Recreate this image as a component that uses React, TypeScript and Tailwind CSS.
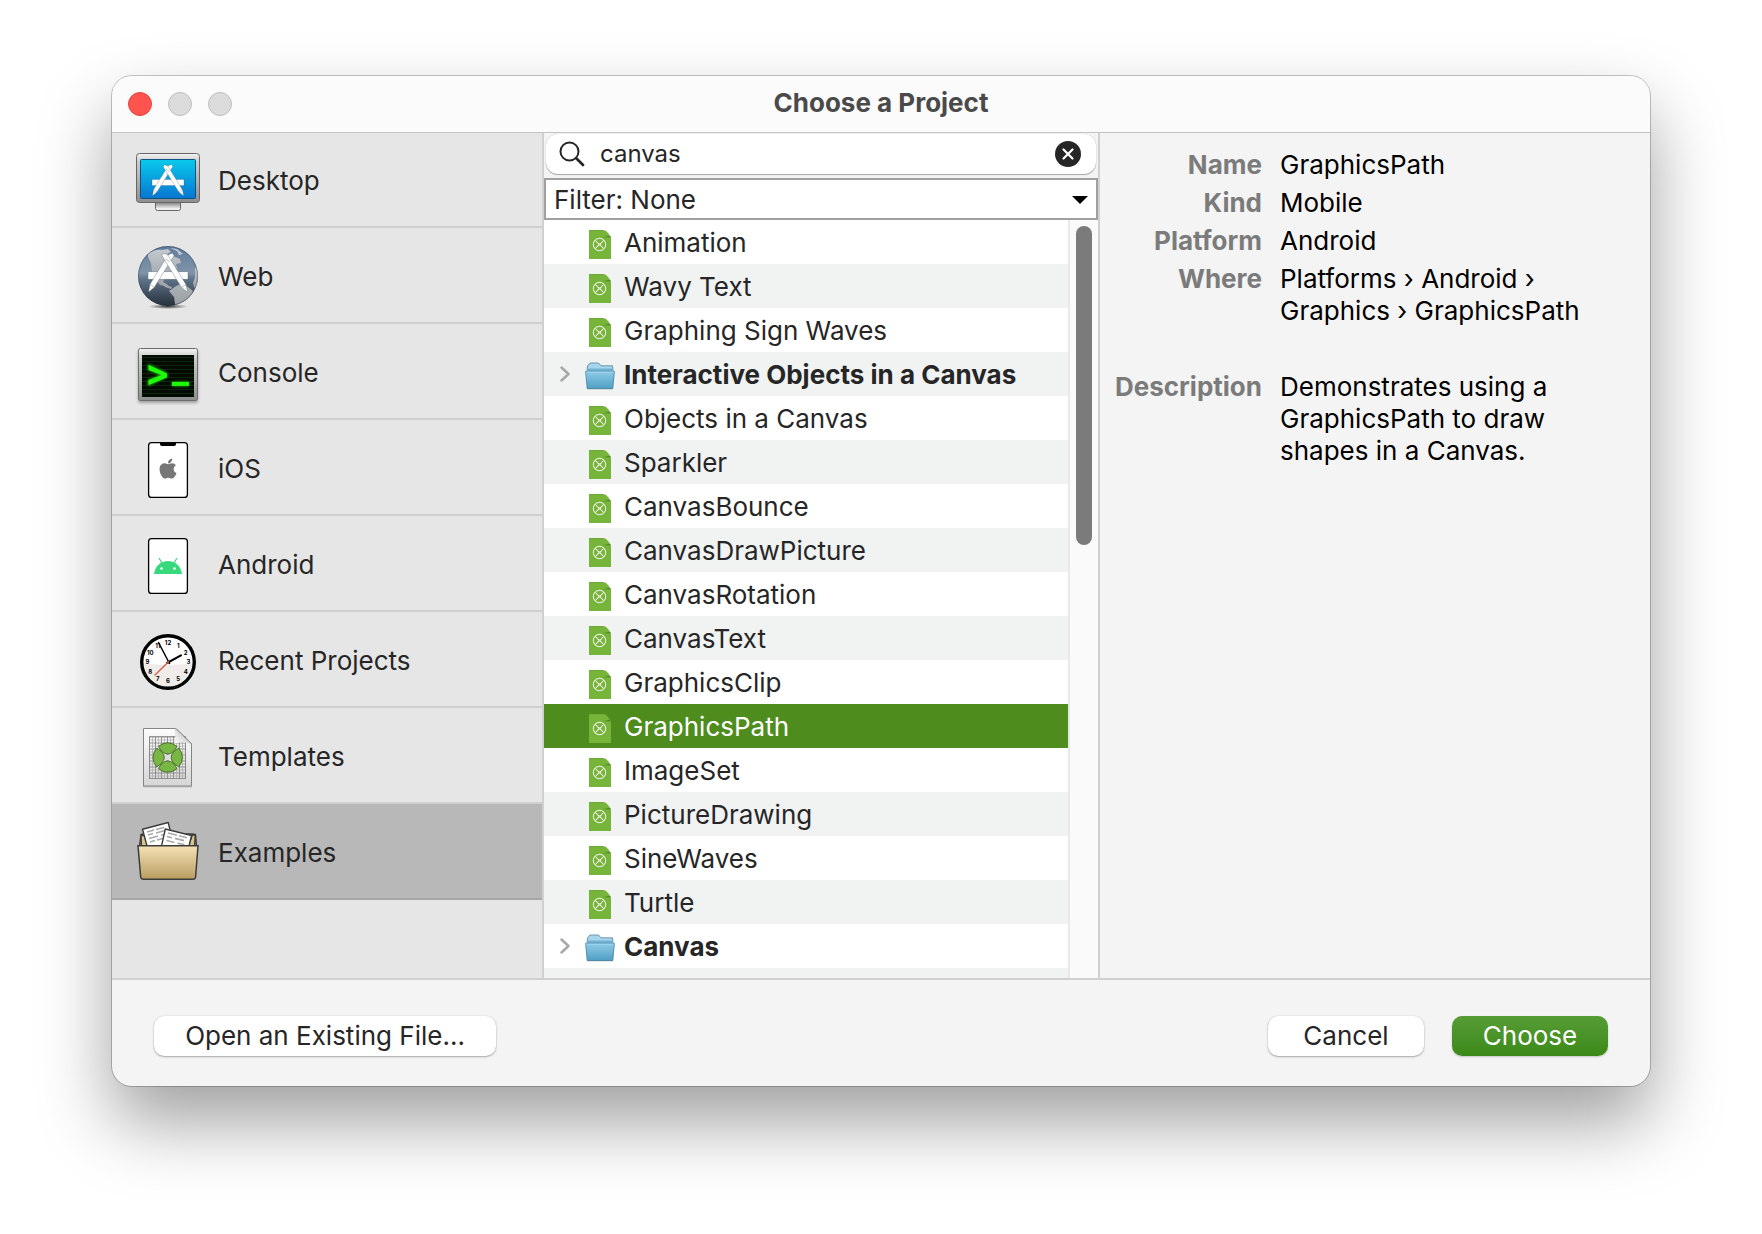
import { useState } from "react";
import type { ReactNode } from "react";
import { FaApple } from "react-icons/fa6";
import clsx from "clsx";

type Category = {
    label: string;
    icon: ReactNode;
};

type Project = {
    name: string;
    folder?: boolean;
};

// Two crossed pencils and a ruler, shared by the desktop and web icons
const AppMark = () => (
    <g fill="#fff" stroke="#3d5566" strokeOpacity="0.55" strokeWidth="0.5">
        <rect x="0" y="15" width="32" height="6" />
        <path d="M16 1.5 19.5 0l1.3 2L5 27.5.8 31l-.3-.3L1.6 25z" />
        <path d="M15.8 1.5 12.3.2l-1.1 2L26.8 27.5l4.4 3.5.4-.4-1.2-5.4z" />
        <path
            d="m1.6 25 3.4 2.5M30.4 25.2l-3.6 2.3M13.8 4.6l3.8 2.4"
            fill="none"
        />
    </g>
);

const DesktopIcon = () => (
    <svg viewBox="0 0 64 64" className="size-16">
        <defs>
            <linearGradient id="bezel" x1="0" y1="0" x2="0" y2="1">
                <stop offset="0" stopColor="#f5f5f5" />
                <stop offset="0.15" stopColor="#cfcfcf" />
                <stop offset="1" stopColor="#8e8e8e" />
            </linearGradient>
            <linearGradient id="screen" x1="0" y1="0" x2="0" y2="1">
                <stop offset="0" stopColor="#09caec" />
                <stop offset="1" stopColor="#0876d2" />
            </linearGradient>
            <linearGradient id="stand" x1="0" y1="0" x2="0" y2="1">
                <stop offset="0.2" stopColor="#8a8a8a" />
                <stop offset="0.8" stopColor="#f0f0f0" />
            </linearGradient>
        </defs>
        <rect
            x="19.5"
            y="52"
            width="25"
            height="9.5"
            rx="2"
            fill="url(#stand)"
            stroke="#666"
        />
        <rect
            x="0.5"
            y="4.5"
            width="63"
            height="49"
            rx="3"
            fill="url(#bezel)"
            stroke="#666"
        />
        <rect
            x="4.5"
            y="10.5"
            width="55"
            height="39"
            rx="1"
            fill="url(#screen)"
            stroke="#0b5583"
        />
        <g transform="translate(16 15.5)">
            <AppMark />
        </g>
    </svg>
);

const WebIcon = () => (
    <svg viewBox="0 0 64 64" className="size-16">
        <defs>
            <linearGradient id="ocean" x1="0" y1="0" x2="0" y2="1">
                <stop offset="0" stopColor="#5f7c9c" />
                <stop offset="0.45" stopColor="#8094a8" />
                <stop offset="0.55" stopColor="#5f7488" />
                <stop offset="1" stopColor="#26303c" />
            </linearGradient>
            <linearGradient id="land" x1="0" y1="0" x2="0" y2="1">
                <stop offset="0" stopColor="#c3c9cf" />
                <stop offset="1" stopColor="#9b9fa3" />
            </linearGradient>
            <radialGradient id="ground">
                <stop offset="0" stopColor="#000" stopOpacity="0.75" />
                <stop offset="1" stopColor="#000" stopOpacity="0" />
            </radialGradient>
            <clipPath id="globe">
                <circle cx="32" cy="31" r="30" />
            </clipPath>
        </defs>
        <ellipse cx="32" cy="61.5" rx="20" ry="2.5" fill="url(#ground)" />
        <circle cx="32" cy="31" r="30" fill="url(#ocean)" />
        <g clipPath="url(#globe)" fill="url(#land)">
            <path d="M12 9c4-3 8-5 14-4l6-1 3 3-4 2 6 2 7 3 1 4-5 1 1 4-5 3-4 3-3 5-3 4 3 3-5-1-5-6-3-8-1-8-3-6z" />
            <path d="m34 3 7 1 6 5-4 1-2-4zM40 41l5-2 7 3 5 4-3 7-6 6-6 4-3-4-1-7-5-6z" />
            <path d="M24 36l5 2 4 3 3 1-1 2-6-2zM59 22l5 6-1 14-4 3-2-7 2-6z" />
        </g>
        <circle
            cx="32"
            cy="31"
            r="29.5"
            fill="none"
            stroke="#2d3a48"
            strokeOpacity="0.4"
        />
        <g transform="translate(12 8) scale(1.25)">
            <AppMark />
        </g>
    </svg>
);

const ConsoleIcon = () => (
    <svg viewBox="0 0 64 64" className="size-16 overflow-visible">
        <defs>
            <pattern
                id="scanlines"
                width="4"
                height="4"
                patternUnits="userSpaceOnUse">
                <rect width="4" height="4" fill="#020a02" />
                <rect width="4" height="1" fill="#0d260c" />
            </pattern>
            <filter id="glow" x="-30%" y="-30%" width="160%" height="160%">
                <feGaussianBlur stdDeviation="1.5" />
            </filter>
        </defs>
        <rect
            x="2"
            y="9"
            width="60"
            height="53"
            rx="2"
            fill="#000"
            opacity="0.3"
            filter="url(#glow)"
        />
        <rect
            x="2.5"
            y="7.5"
            width="59"
            height="52"
            rx="2"
            fill="url(#bezel)"
            stroke="#6d6d6d"
        />
        <rect x="6" y="14" width="52" height="42" fill="url(#scanlines)" />
        <g fill="#23d30c" filter="url(#glow)">
            <path d="M12 23v6l13 5-13 5v6l19-9v-4z" />
            <path d="M36 41h17v4H36z" />
        </g>
        <g fill="#1dff08">
            <path d="M12.5 24v5L26 34l-13.5 5v5L31 36.5v-4z" />
            <path d="M36 41h17v3.8H36z" />
        </g>
    </svg>
);

const IosIcon = () => (
    <svg viewBox="0 0 64 64" className="size-16">
        <rect
            x="12.6"
            y="5.6"
            width="38.8"
            height="54.8"
            rx="3"
            fill="#fff"
            stroke="#000"
            strokeWidth="1.3"
        />
        <path d="M24 5h16v2q0 2-2 2H26q-2 0-2-2z" />
        <FaApple x="20.5" y="20" size={23} color="#777" />
    </svg>
);

const AndroidIcon = () => (
    <svg viewBox="0 0 64 64" className="size-16">
        <rect
            x="12.6"
            y="5.6"
            width="38.8"
            height="54.8"
            rx="3"
            fill="#fff"
            stroke="#000"
            strokeWidth="1.3"
        />
        <path d="M18 41C19 33 25 28 32 28s13 5 14 13z" fill="#38d97c" />
        <path
            d="m23.3 25.5 2.9 5M40.7 25.5l-2.9 5"
            stroke="#38d97c"
            strokeWidth="1.2"
            strokeLinecap="round"
        />
        <circle cx="25.5" cy="35.5" r="1.3" fill="#fff" />
        <circle cx="38.5" cy="35.5" r="1.3" fill="#fff" />
    </svg>
);

const ClockIcon = () => {
    const hours = [1, 2, 3, 4, 5, 6, 7, 8, 9, 10, 11, 12];

    return (
        <svg viewBox="0 0 64 64" className="size-16">
            <circle cx="32" cy="33" r="26.5" fill="#fff" />
            <path d="M7 34q25 4 50 0a25 25 0 0 1-50 0z" fill="#efecea" />
            <circle
                cx="32"
                cy="33"
                r="26.3"
                fill="none"
                stroke="#000"
                strokeWidth="3.4"
            />
            {hours.map((hour) => (
                <text
                    key={hour}
                    x={32 + 20.5 * Math.sin((hour * Math.PI) / 6)}
                    y={35.3 - 19 * Math.cos((hour * Math.PI) / 6)}
                    textAnchor="middle"
                    className="font-['Inter'] text-[6px] font-bold">
                    {hour}
                </text>
            ))}
            <path
                d="m33.5 34.5-11-21"
                stroke="#000"
                strokeWidth="1.5"
                strokeLinecap="round"
            />
            <path
                d="M31 34l14-7.7"
                stroke="#000"
                strokeWidth="2"
                strokeLinecap="round"
            />
            <path
                d="M32.5 32.7 19 46"
                stroke="#d9604a"
                strokeWidth="1.5"
                strokeLinecap="round"
            />
        </svg>
    );
};

const TemplateIcon = () => (
    <svg viewBox="0 0 64 64" className="size-16 overflow-visible">
        <defs>
            <linearGradient id="sheet" x1="0" y1="0" x2="0" y2="1">
                <stop offset="0" stopColor="#fdfdfd" />
                <stop offset="1" stopColor="#d6d6d6" />
            </linearGradient>
            <linearGradient id="curl" x1="0" y1="1" x2="1" y2="0">
                <stop offset="0" stopColor="#fff" />
                <stop offset="0.5" stopColor="#d8d8d8" />
                <stop offset="1" stopColor="#f2f2f2" />
            </linearGradient>
            <pattern
                id="grid"
                x="13"
                y="11.5"
                width="6"
                height="6"
                patternUnits="userSpaceOnUse">
                <path d="M0 .5h6M.5 0v6" stroke="#858585" strokeWidth="0.9" />
                <path
                    d="M0 3.5h6M3.5 0v6"
                    stroke="#a9a9a9"
                    strokeWidth="0.7"
                />
            </pattern>
        </defs>
        <path d="M7 58h49v4.5H7z" fill="#000" opacity="0.15" />
        <path
            d="M7.5 3.5H40L55.5 19v42h-48z"
            fill="url(#sheet)"
            stroke="#858585"
        />
        <path d="M13 11.5h37V54H13z" fill="url(#grid)" />
        <path
            d="M13.5 11.5h36v42h-36z"
            fill="none"
            stroke="#858585"
            strokeWidth="0.8"
        />
        <path
            d="m21.5 22.3 20.4 20.4m0-20.4L21.5 42.7"
            stroke="#f0f0f0"
            strokeWidth="2"
        />
        <g fill="#78b744" stroke="#47682d" strokeWidth="0.9">
            <path d="M22.3 21.5q9.4-7.5 18.8 0-3 5.5-6.4 7-3 .9-6 0-3.4-1.500-6.400-7z" />
            <path d="M22.3 43.5q9.4 7.5 18.8 0-3-5.5-6.4-7-3-.9-6 0-3.4 1.5-6.4 7z" />
            <path d="M20.7 23.1q-7.5 9.4 0 18.8 5.5-3 7-6.4.9-3 0-6-1.5-3.4-7-6.4z" />
            <path d="M42.7 23.1q7.5 9.4 0 18.8-5.5-3-7-6.4-.9-3 0-6 1.5-3.4 7-6.4z" />
        </g>
        <rect x="29" y="30" width="5.5" height="5" fill="#ddd" />
        <path
            d="M38.5 4c1 4 1 9 0 14.5 6-1.5 11-1.5 17 .5L40 3.5z"
            fill="url(#curl)"
        />
        <path d="M40 3.5 55.5 19" stroke="#858585" fill="none" />
    </svg>
);

const ExamplesIcon = () => (
    <svg viewBox="0 0 64 64" className="size-16">
        <defs>
            <linearGradient id="box" x1="0" y1="0" x2="0" y2="1">
                <stop offset="0" stopColor="#f5e2b5" />
                <stop offset="1" stopColor="#b99c61" />
            </linearGradient>
        </defs>
        <g stroke="#3b3d3b" strokeWidth="1.4" strokeLinejoin="round">
            <path d="M3.5 25 5 13.5l3-.5h48l3.500.5L60.5 25z" fill="#b79a60" />
            <path d="M8 13.5 12 25H5.5L5 15z" fill="#dcc48e" />
            <path d="m56.5 13.5-4 11.5h6l.7-10z" fill="#dcc48e" />
            <path d="m6.5 8.3 25.7-6.8L38 25H11z" fill="#fff" />
        </g>
        <path
            d="m11 11 7-2m2-.5 8-2M12 14l5-1.4m3-.6 9-2.5M13 17.5l9-2.5m3-.8 4-1M14 21l5-1.4m2-.6 6-1.5"
            stroke="#a9a9a9"
            strokeWidth="1.6"
        />
        <path
            d="M29.3 8 55.5 14.5 53 25H25.5z"
            fill="#fff"
            stroke="#3b3d3b"
            strokeWidth="1.4"
        />
        <path
            d="m32 12 9 2.2m2 .5 8 2M31 15.5l5 1.2m3 .7 9 2.2M30.5 19.5l8 2m3 .6 7 1.7"
            stroke="#a9a9a9"
            strokeWidth="1.6"
        />
        <path
            d="M2 24.8h60L59.6 56q-.3 2.3-2.6 2.3H7.5Q5 58.3 4.7 56z"
            fill="url(#box)"
            stroke="#3b3d3b"
            strokeWidth="1.5"
        />
    </svg>
);

const FileIcon = () => (
    <svg viewBox="0 0 22 29" className="h-[29px] w-[22px]">
        <path d="M0 0h14q3 0 5.2 3.2L22 7.5V29H0z" fill="#76b43a" />
        <path d="M0 0h14l1 .6H0z" fill="#66a02e" />
        <path d="M13.5 7.3h8.4l-1-1.5z" fill="#4e8424" />
        <g fill="none" stroke="#fff" strokeWidth="1">
            <circle cx="10.5" cy="14.5" r="6.2" />
            <path d="m6.2 10.2 3 3.2q1.3 1 2.6 0l3-3.2M6.2 18.8l3-3.2q1.3-1 2.6 0l3 3.2M6.2 10.2l3 3.2q1 1.1 0 2.2l-3 3.2M14.8 10.2l-3 3.2q-1 1.1 0 2.2l3 3.2" />
        </g>
    </svg>
);

const FolderIcon = () => (
    <svg viewBox="0 0 30 28" className="h-7 w-[30px]">
        <defs>
            <linearGradient id="folder" x1="0" y1="0" x2="0" y2="1">
                <stop offset="0" stopColor="#8fcbe8" />
                <stop offset="1" stopColor="#4f9fc4" />
            </linearGradient>
        </defs>
        <path d="M2 26.5h26v1.2H2z" fill="#000" opacity="0.15" />
        <path
            d="M2 9.5 2.5 4 5 1h8.5L16 3.8h11.5l.6 5.7z"
            fill="#a5d6ee"
            stroke="#56819a"
            strokeWidth="0.8"
        />
        <path d="M2.5 6.5h25v3h-25z" fill="#73b1d1" />
        <path
            d="M.6 9.3h28.8l-1.6 17.2H2.2z"
            fill="url(#folder)"
            stroke="#3e7f9f"
            strokeWidth="0.8"
        />
        <path d="M1.2 10h27.6" stroke="#b4e0f2" strokeWidth="0.8" />
    </svg>
);

const categories: Category[] = [
    { label: "Desktop", icon: <DesktopIcon /> },
    { label: "Web", icon: <WebIcon /> },
    { label: "Console", icon: <ConsoleIcon /> },
    { label: "iOS", icon: <IosIcon /> },
    { label: "Android", icon: <AndroidIcon /> },
    { label: "Recent Projects", icon: <ClockIcon /> },
    { label: "Templates", icon: <TemplateIcon /> },
    { label: "Examples", icon: <ExamplesIcon /> },
];

const projects: Project[] = [
    { name: "Animation" },
    { name: "Wavy Text" },
    { name: "Graphing Sign Waves" },
    { name: "Interactive Objects in a Canvas", folder: true },
    { name: "Objects in a Canvas" },
    { name: "Sparkler" },
    { name: "CanvasBounce" },
    { name: "CanvasDrawPicture" },
    { name: "CanvasRotation" },
    { name: "CanvasText" },
    { name: "GraphicsClip" },
    { name: "GraphicsPath" },
    { name: "ImageSet" },
    { name: "PictureDrawing" },
    { name: "SineWaves" },
    { name: "Turtle" },
    { name: "Canvas", folder: true },
];

const Sidebar = () => {
    const [active, setActive] = useState("Examples");

    return (
        <nav className="w-[432px] shrink-0 border-r-2 border-[#d0d0d0] bg-[#e6e6e6]">
            {categories.map(({ label, icon }) => (
                <button
                    key={label}
                    onClick={() => setActive(label)}
                    className={clsx(
                        "flex h-24 w-full items-center gap-[18px] border-b-2 pt-0.5 pl-6 text-left",
                        label === active
                            ? "border-[#a6a6a6] bg-[#b8b8b8]"
                            : "border-[#d0d0d0]"
                    )}>
                    <span className="pt-0.5">{icon}</span>
                    {label}
                </button>
            ))}
        </nav>
    );
};

const ProjectList = () => {
    const [search, setSearch] = useState("canvas");
    const [selected, setSelected] = useState("GraphicsPath");

    return (
        <section className="flex w-[556px] shrink-0 flex-col border-r-2 border-[#d0d0d0]">
            <div className="mx-0.5 mt-0.5 mb-1 flex h-10 shrink-0 items-center rounded-xl bg-white pr-[15px] pl-[13px] shadow-[0_1px_1px_rgba(0,0,0,0.3),0_0_1px_rgba(0,0,0,0.25)]">
                <svg
                    viewBox="0 0 26 26"
                    fill="none"
                    stroke="#262626"
                    className="size-[26px] shrink-0">
                    <circle cx="10.5" cy="10.5" r="9" strokeWidth="2" />
                    <path
                        d="m17.5 17.5 6.5 6.5"
                        strokeWidth="2.8"
                        strokeLinecap="round"
                    />
                </svg>
                <input
                    type="text"
                    aria-label="Search"
                    value={search}
                    onChange={(e) => setSearch(e.target.value)}
                    className="ml-[15px] min-w-0 flex-1 text-2xl outline-none"
                />
                <button aria-label="Clear" onClick={() => setSearch("")}>
                    <svg viewBox="0 0 26 26" className="size-[26px]">
                        <circle cx="13" cy="13" r="13" fill="#262626" />
                        <path
                            d="m8.5 8.5 9 9m0-9-9 9"
                            stroke="#fff"
                            strokeWidth="2.2"
                            strokeLinecap="round"
                        />
                    </svg>
                </button>
            </div>
            <div className="relative shrink-0">
                <select
                    aria-label="Filter"
                    className="block h-[42px] w-full appearance-none border-2 border-[#a0a0a0] bg-white pb-0.5 pl-2 outline-none">
                    <option>Filter: None</option>
                </select>
                <svg
                    viewBox="0 0 16 8"
                    className="pointer-events-none absolute top-[18px] right-2.5 h-2 w-4">
                    <path d="M0 0h16L8 8z" />
                </svg>
            </div>
            <div className="flex min-h-0 flex-1">
                <ul className="min-w-0 flex-1 overflow-hidden bg-[#f1f3f3]">
                    {projects.map(({ name, folder }) => (
                        <li key={name} className="odd:bg-white">
                            <button
                                onClick={() => setSelected(name)}
                                className={clsx(
                                    "flex h-11 w-full items-center pl-4 text-left",
                                    folder && "font-bold",
                                    name === selected &&
                                        "bg-[#4e8c1e] text-white"
                                )}>
                                <span className="w-[25px] shrink-0">
                                    {folder && (
                                        <svg
                                            viewBox="0 0 10 16"
                                            fill="none"
                                            className="h-4 w-2.5">
                                            <path
                                                d="m1.5 1.5 7 6.5-7 6.5"
                                                stroke="#a8a8a8"
                                                strokeWidth="2.5"
                                                strokeLinecap="round"
                                                strokeLinejoin="round"
                                            />
                                        </svg>
                                    )}
                                </span>
                                <span className="flex w-[30px] shrink-0 justify-center pt-1">
                                    {folder ? <FolderIcon /> : <FileIcon />}
                                </span>
                                <span className="pl-[9px] whitespace-nowrap">
                                    {name}
                                </span>
                            </button>
                        </li>
                    ))}
                </ul>
                <div className="flex w-[30px] justify-center border-l-2 border-[#e8e8e8] bg-[#fafafa] pt-1.5">
                    <div className="h-[42.4%] w-4 rounded-full bg-[#7b7b7b]" />
                </div>
            </div>
        </section>
    );
};

const Details = () => (
    <dl className="grid min-w-0 flex-1 grid-cols-[162px_1fr] content-start gap-x-[18px] gap-y-1.5 pt-[17px] pr-10 leading-8 text-black [&>dt]:text-right [&>dt]:font-bold [&>dt]:text-[#7b7b7b]">
        <dt>Name</dt>
        <dd>GraphicsPath</dd>
        <dt>Kind</dt>
        <dd>Mobile</dd>
        <dt>Platform</dt>
        <dd>Android</dd>
        <dt>Where</dt>
        <dd>Platforms › Android › Graphics › GraphicsPath</dd>
        <dt className="pt-[38px]">Description</dt>
        <dd className="pt-[38px]">
            Demonstrates using a GraphicsPath to draw shapes in a Canvas.
        </dd>
    </dl>
);

const App = () => {
    return (
        <div className="flex h-screen bg-white px-28 pt-19 pb-37 font-['Inter',sans-serif] text-[26px] text-[#262626]">
            <main className="flex min-w-0 flex-1 flex-col overflow-hidden rounded-[20px] bg-[#f4f4f4] shadow-[0_0_0_1px_rgba(0,0,0,0.22),0_36px_72px_rgba(0,0,0,0.38)]">
                <header className="relative z-10 grid h-14 shrink-0 grid-cols-[1fr_auto_1fr] items-center bg-[#fbfbfb] px-4 shadow-[0_1px_0_#c4c4c4]">
                    <div className="flex gap-4">
                        <button
                            aria-label="Close"
                            className="size-6 rounded-full border border-[#e2463f] bg-[#ff544d]"
                        />
                        <button
                            aria-label="Minimize"
                            className="size-6 rounded-full border border-[#bebebe] bg-[#dcdcdc]"
                        />
                        <button
                            aria-label="Zoom"
                            className="size-6 rounded-full border border-[#bebebe] bg-[#dcdcdc]"
                        />
                    </div>
                    <h1 className="pb-1 font-bold text-[#4a4a4a]">
                        Choose a Project
                    </h1>
                </header>
                <div className="flex min-h-0 flex-1">
                    <Sidebar />
                    <ProjectList />
                    <Details />
                </div>
                <footer className="flex h-[108px] shrink-0 items-start gap-7 border-t-2 border-[#d0d0d0] px-[42px] pt-9">
                    <button className="mr-auto h-10 w-[342px] rounded-[10px] bg-white pb-0.5 shadow-[0_1px_2px_rgba(0,0,0,0.3),0_0_1px_rgba(0,0,0,0.25)]">
                        Open an Existing File...
                    </button>
                    <button className="h-10 w-39 rounded-[10px] bg-white pb-0.5 shadow-[0_1px_2px_rgba(0,0,0,0.3),0_0_1px_rgba(0,0,0,0.25)]">
                        Cancel
                    </button>
                    <button className="h-10 w-39 rounded-[10px] bg-linear-to-b from-[#579c35] to-[#3b8a18] pb-0.5 text-white shadow-[0_1px_2px_rgba(0,0,0,0.2)]">
                        Choose
                    </button>
                </footer>
            </main>
        </div>
    );
};

export default App;
